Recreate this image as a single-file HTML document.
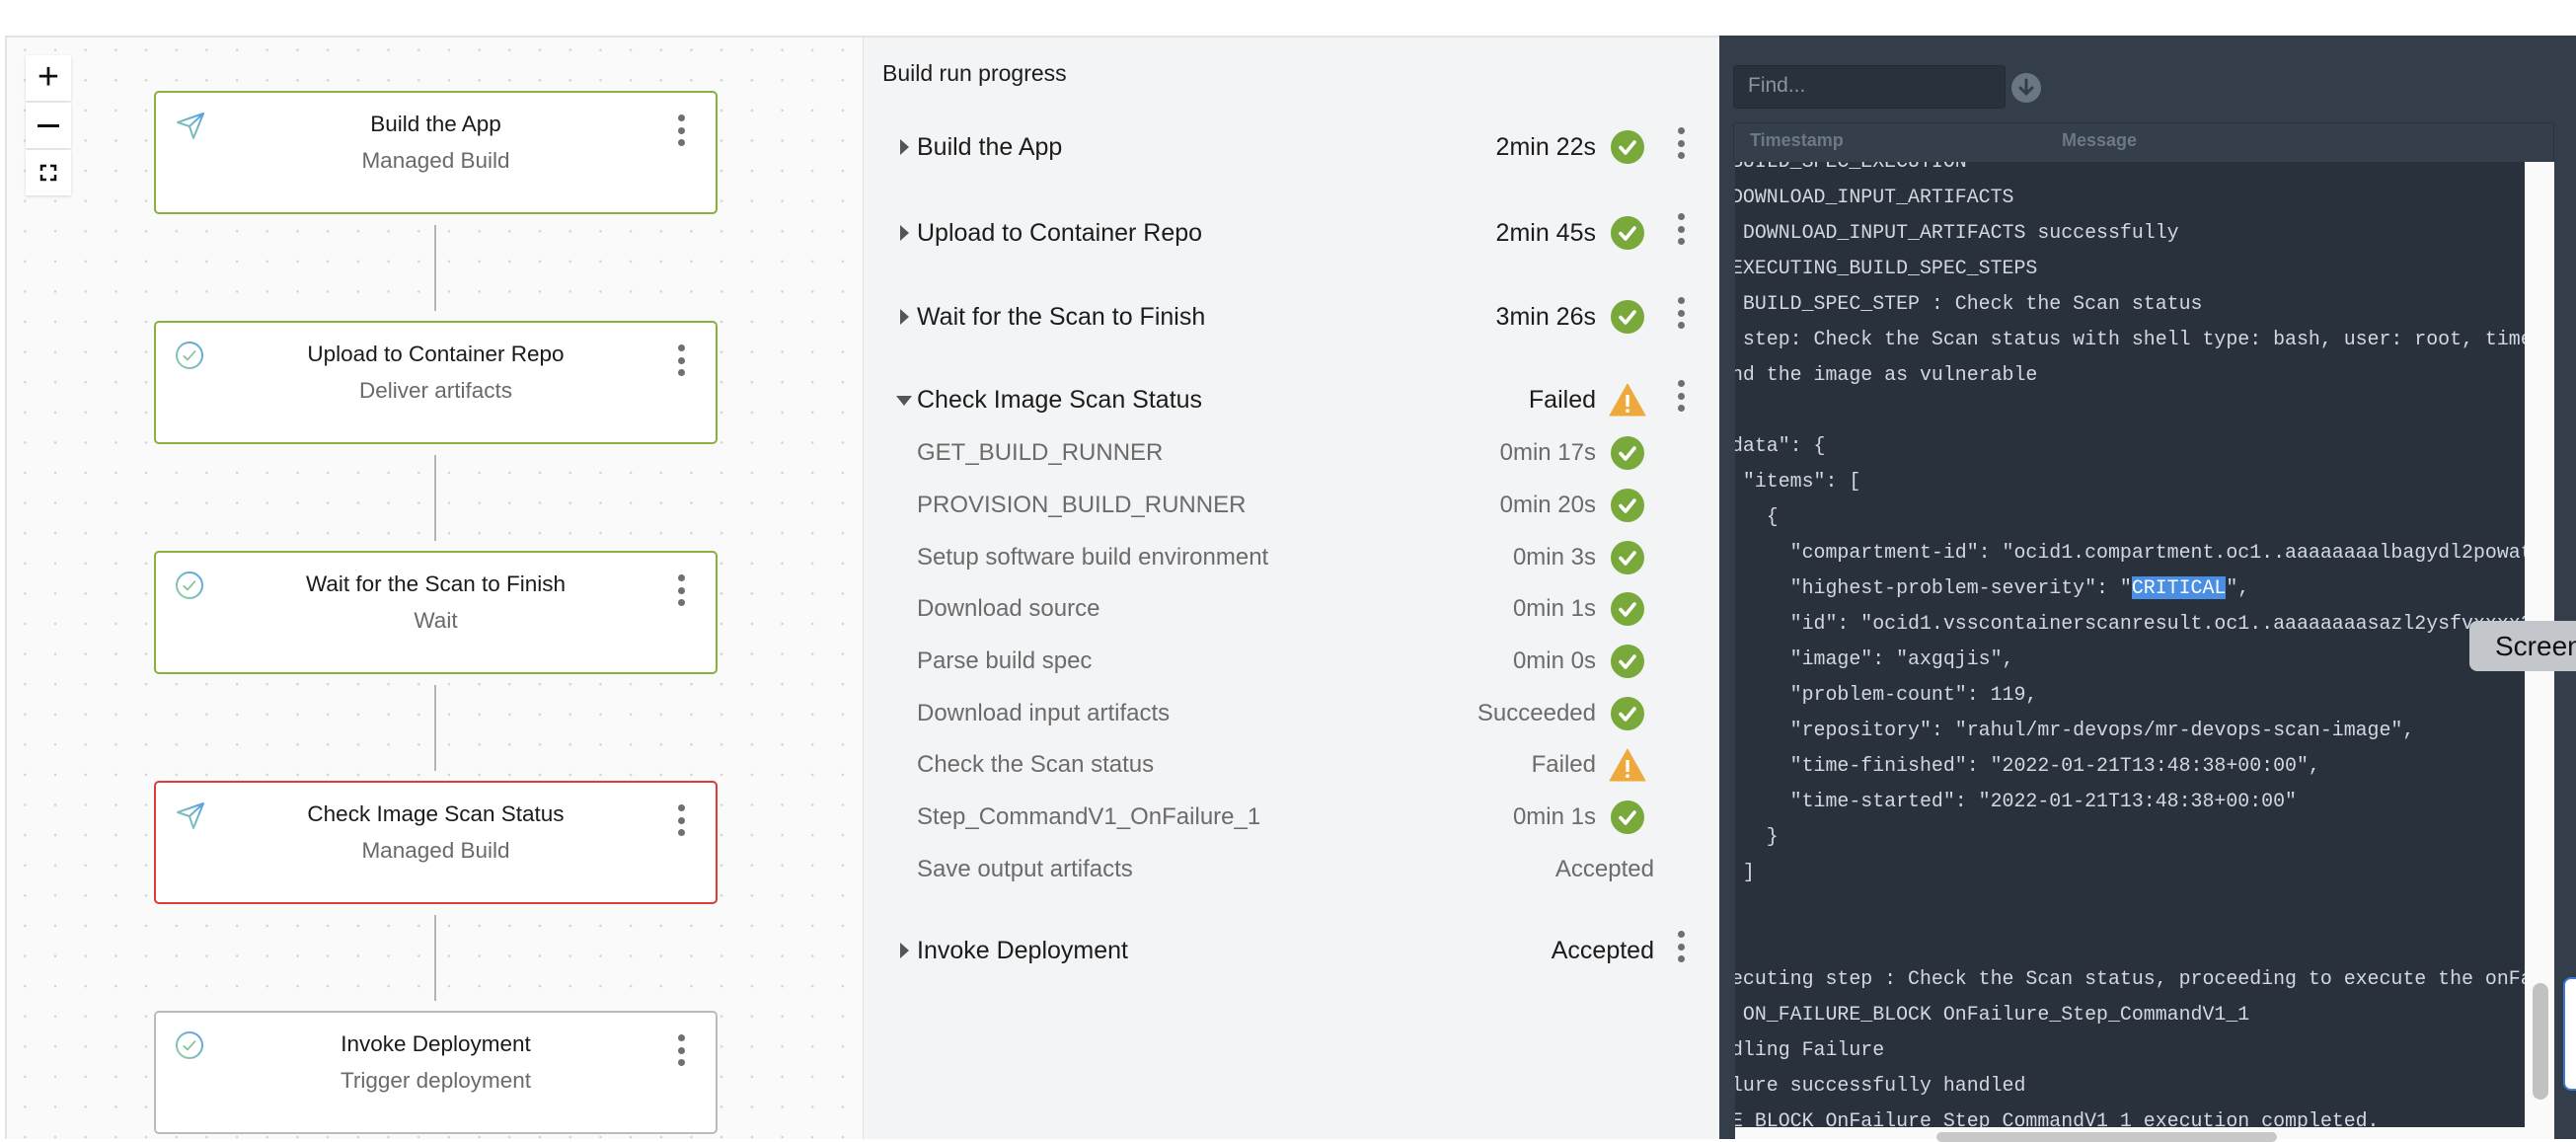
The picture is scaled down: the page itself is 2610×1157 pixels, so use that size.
<!DOCTYPE html>
<html><head><meta charset="utf-8">
<style>
*{margin:0;padding:0;box-sizing:border-box}
body{width:2610px;height:1154px;position:relative;overflow:hidden;background:#fff;font-family:"Liberation Sans",sans-serif}
.abs{position:absolute}
#left{left:5px;top:36px;width:870px;height:1118px;background-color:#fafafa;border-top:2px solid #e3e3e3;border-left:2px solid #e3e3e3;border-right:1px solid #e3e3e3;
background-image:radial-gradient(circle,#d2d2d2 1px,transparent 1.5px);background-size:30.7px 30.6px;background-position:3px 28px}
.zb{position:absolute;left:26px;width:46px;height:46px;background:#fff;box-shadow:0 1px 3px rgba(0,0,0,.15);font-size:38px;text-align:center;line-height:44px;color:#111}
.card{position:absolute;left:156px;width:571px;height:125px;background:#fff;border:2.5px solid #86b23d;border-radius:5px}
.card .t{position:absolute;left:0;right:0;top:19px;text-align:center;font-size:22.5px;color:#1a1a1a}
.card .s{position:absolute;left:0;right:0;top:56px;text-align:center;font-size:22.5px;color:#6a6a6a}
.card svg.ic{position:absolute;left:19px;top:18px}
.keb{position:absolute;width:7px}
.keb i{display:block;width:7px;height:7px;border-radius:50%;background:#6f6f6f;margin-bottom:5.5px}
.conn{position:absolute;left:440px;width:2px;background:#b5b5b5}
#mid{left:875px;top:36px;width:867px;height:1118px;background:#f3f4f6;border-top:2px solid #e3e3e3}
.row{position:absolute;left:0;width:867px;height:34px;line-height:34px}
.row .n{position:absolute;left:54px;font-size:25px;color:#1c1c1c}
.row .v{position:absolute;right:125px;font-size:25px;color:#1c1c1c}
.row.sub .n,.row.sub .v{font-size:24px;color:#6b6b6b}
.row .v.far{right:66px}
.tri{position:absolute;left:37px;top:9px;width:0;height:0;border-top:8px solid transparent;border-bottom:8px solid transparent;border-left:9px solid #555}
.tri.down{left:33px;top:13px;border-left:8px solid transparent;border-right:8px solid transparent;border-top:10px solid #555;border-bottom:0}
.ok{position:absolute;left:757px;top:0;width:34px;height:34px}
.warn{position:absolute;left:755px;top:0}
.row .keb{left:825px;top:-3px}
#right{left:1742px;top:36px;width:868px;height:1118px;background:#343e4b}
#log{left:1758px;top:164px;width:800px;height:978px;background:#29323c;overflow:hidden}
#log pre{position:absolute;left:-4px;font-family:"Liberation Mono",monospace;font-size:19.9px;color:#d3d8de;line-height:36px;white-space:pre}
.hl{background:#4a8fe4;color:#fff}
</style></head><body>
<div class="abs" style="left:0;top:0;width:2610px;height:36px;background:#fff"></div>

<div id="left" class="abs"></div>
<div class="zb" style="top:56px">+</div>
<div class="zb" style="top:104px"><div style="position:absolute;left:12px;top:22px;width:22px;height:3px;background:#111"></div></div>
<div class="zb" style="top:152px"><svg width="46" height="46" viewBox="0 0 46 46" style="position:absolute;left:0;top:0"><path d="M16 21v-5h5M25 16h5v5M30 25v5h-5M21 30h-5v-5" fill="none" stroke="#111" stroke-width="2.5"/></svg></div>

<svg width="0" height="0" style="position:absolute"><defs>
<linearGradient id="g" x1="0" y1="1" x2="1" y2="0"><stop offset="0" stop-color="#8fd19e"/><stop offset="1" stop-color="#5aa0e8"/></linearGradient>
<symbol id="ck" viewBox="0 0 34 34"><circle cx="17" cy="17" r="17" fill="#78a93a"/><path d="M10 17.5l5 5.5 9-11" fill="none" stroke="#fff" stroke-width="3.6" stroke-linecap="round" stroke-linejoin="round"/></symbol>
<symbol id="wn" viewBox="0 0 38 34"><path d="M19 1L37 33H1Z" fill="#eda93b" stroke="#eda93b" stroke-linejoin="round" stroke-width="1"/><rect x="17.3" y="12" width="3.4" height="12" fill="#fff"/><rect x="17.3" y="26.5" width="3.4" height="3.4" fill="#fff"/></symbol>
</defs></svg>

<div class="card" style="top:92px"><svg class="ic" width="32" height="32" viewBox="0 0 32 32"><path d="M3 12 L29 3 L19 28 L15 16 Z M15 16 L29 3" fill="none" stroke="url(#g)" stroke-width="2" stroke-linejoin="round"/></svg><div class="t">Build the App</div><div class="s">Managed Build</div><div class="keb" style="left:529px;top:22px"><i></i><i></i><i></i></div></div>
<div class="conn" style="top:228px;height:87px"></div>
<div class="card" style="top:325px"><svg class="ic" width="32" height="32" viewBox="0 0 32 32"><circle cx="15" cy="15" r="13" fill="none" stroke="url(#g)" stroke-width="2"/><path d="M9 15.5l4 4 8-9" fill="none" stroke="#7cbf8c" stroke-width="1.6"/></svg><div class="t">Upload to Container Repo</div><div class="s">Deliver artifacts</div><div class="keb" style="left:529px;top:22px"><i></i><i></i><i></i></div></div>
<div class="conn" style="top:461px;height:87px"></div>
<div class="card" style="top:558px"><svg class="ic" width="32" height="32" viewBox="0 0 32 32"><circle cx="15" cy="15" r="13" fill="none" stroke="url(#g)" stroke-width="2"/><path d="M9 15.5l4 4 8-9" fill="none" stroke="#7cbf8c" stroke-width="1.6"/></svg><div class="t">Wait for the Scan to Finish</div><div class="s">Wait</div><div class="keb" style="left:529px;top:22px"><i></i><i></i><i></i></div></div>
<div class="conn" style="top:694px;height:87px"></div>
<div class="card" style="top:791px;border-color:#de3a3a"><svg class="ic" width="32" height="32" viewBox="0 0 32 32"><path d="M3 12 L29 3 L19 28 L15 16 Z M15 16 L29 3" fill="none" stroke="url(#g)" stroke-width="2" stroke-linejoin="round"/></svg><div class="t">Check Image Scan Status</div><div class="s">Managed Build</div><div class="keb" style="left:529px;top:22px"><i></i><i></i><i></i></div></div>
<div class="conn" style="top:927px;height:87px"></div>
<div class="card" style="top:1024px;border-color:#b8bcc2"><svg class="ic" width="32" height="32" viewBox="0 0 32 32"><circle cx="15" cy="15" r="13" fill="none" stroke="url(#g)" stroke-width="2"/><path d="M9 15.5l4 4 8-9" fill="none" stroke="#7cbf8c" stroke-width="1.6"/></svg><div class="t">Invoke Deployment</div><div class="s">Trigger deployment</div><div class="keb" style="left:529px;top:22px"><i></i><i></i><i></i></div></div>

<div id="mid" class="abs">
<div class="abs" style="left:19px;top:23px;font-size:23px;color:#1c1c1c">Build run progress</div>
</div>
<div class="abs" style="left:875px;top:36px;width:867px;height:1118px">
<div class="row" style="top:96px"><div class="tri"></div><div class="n">Build the App</div><div class="v">2min 22s</div><svg class="ok"><use href="#ck"/></svg><div class="keb"><i></i><i></i><i></i></div></div>
<div class="row" style="top:183px"><div class="tri"></div><div class="n">Upload to Container Repo</div><div class="v">2min 45s</div><svg class="ok"><use href="#ck"/></svg><div class="keb"><i></i><i></i><i></i></div></div>
<div class="row" style="top:268px"><div class="tri"></div><div class="n">Wait for the Scan to Finish</div><div class="v">3min 26s</div><svg class="ok"><use href="#ck"/></svg><div class="keb"><i></i><i></i><i></i></div></div>
<div class="row" style="top:352px"><div class="tri down"></div><div class="n">Check Image Scan Status</div><div class="v">Failed</div><svg class="warn" width="38" height="34"><use href="#wn"/></svg><div class="keb"><i></i><i></i><i></i></div></div>
<div class="row sub" style="top:406px"><div class="n">GET_BUILD_RUNNER</div><div class="v">0min 17s</div><svg class="ok"><use href="#ck"/></svg></div>
<div class="row sub" style="top:459px"><div class="n">PROVISION_BUILD_RUNNER</div><div class="v">0min 20s</div><svg class="ok"><use href="#ck"/></svg></div>
<div class="row sub" style="top:512px"><div class="n">Setup software build environment</div><div class="v">0min 3s</div><svg class="ok"><use href="#ck"/></svg></div>
<div class="row sub" style="top:564px"><div class="n">Download source</div><div class="v">0min 1s</div><svg class="ok"><use href="#ck"/></svg></div>
<div class="row sub" style="top:617px"><div class="n">Parse build spec</div><div class="v">0min 0s</div><svg class="ok"><use href="#ck"/></svg></div>
<div class="row sub" style="top:670px"><div class="n">Download input artifacts</div><div class="v">Succeeded</div><svg class="ok"><use href="#ck"/></svg></div>
<div class="row sub" style="top:722px"><div class="n">Check the Scan status</div><div class="v">Failed</div><svg class="warn" width="38" height="34"><use href="#wn"/></svg></div>
<div class="row sub" style="top:775px"><div class="n">Step_CommandV1_OnFailure_1</div><div class="v">0min 1s</div><svg class="ok"><use href="#ck"/></svg></div>
<div class="row sub" style="top:828px"><div class="n">Save output artifacts</div><div class="v far">Accepted</div></div>
<div class="row" style="top:910px"><div class="tri"></div><div class="n">Invoke Deployment</div><div class="v far">Accepted</div><div class="keb"><i></i><i></i><i></i></div></div>
</div>

<div id="right" class="abs"></div>
<div class="abs" style="left:1756px;top:66px;width:276px;height:44px;background:#29323c;border:1.5px solid #222a33;border-radius:4px;font-size:21px;color:#8a939e;padding-left:14px;line-height:40px">Find...</div>
<svg class="abs" style="left:2038px;top:74px" width="30" height="30" viewBox="0 0 30 30"><circle cx="15" cy="15" r="15" fill="#6b7685"/><path d="M15 7v14M9 15l6 6 6-6" fill="none" stroke="#343e4b" stroke-width="3" stroke-linecap="round" stroke-linejoin="round"/></svg>
<div class="abs" style="left:1756px;top:124px;width:832px;height:40px;background:#353f4c;border:1.5px solid #2a323c;border-bottom:none;border-radius:3px 3px 0 0"></div>
<div class="abs" style="left:1773px;top:132px;font-size:18px;font-weight:bold;color:#6d7886">Timestamp</div>
<div class="abs" style="left:2089px;top:132px;font-size:18px;font-weight:bold;color:#6d7886">Message</div>
<div class="abs" style="left:1758px;top:164px;width:830px;height:990px;background:#fafafa"></div>
<div id="log" class="abs">
<pre style="top:-18px">BUILD_SPEC_EXECUTION
DOWNLOAD_INPUT_ARTIFACTS
 DOWNLOAD_INPUT_ARTIFACTS successfully
EXECUTING_BUILD_SPEC_STEPS
 BUILD_SPEC_STEP : Check the Scan status
 step: Check the Scan status with shell type: bash, user: root, timeout
nd the image as vulnerable

data": {
 "items": [
   {
     "compartment-id": "ocid1.compartment.oc1..aaaaaaaalbagydl2powat
     "highest-problem-severity": "<span class="hl">CRITICAL</span>",
     "id": "ocid1.vsscontainerscanresult.oc1..aaaaaaaasazl2ysfvxxxx2
     "image": "axgqjis",
     "problem-count": 119,
     "repository": "rahul/mr-devops/mr-devops-scan-image",
     "time-finished": "2022-01-21T13:48:38+00:00",
     "time-started": "2022-01-21T13:48:38+00:00"
   }
 ]


ecuting step : Check the Scan status, proceeding to execute the onFail
 ON_FAILURE_BLOCK OnFailure_Step_CommandV1_1
dling Failure
lure successfully handled
E_BLOCK OnFailure_Step_CommandV1_1 execution completed.</pre>
</div>
<div class="abs" style="left:2566px;top:996px;width:16px;height:118px;background:#c1c1c1;border-radius:8px"></div>
<div class="abs" style="left:1962px;top:1147px;width:345px;height:10px;background:#c8c8c8;border-radius:5px"></div>
<div class="abs" style="left:2588px;top:164px;width:22px;height:990px;background:#343e4b"></div>
<div class="abs" style="left:2502px;top:629px;width:120px;height:51px;background:#c3c7cc;border-radius:8px;font-size:28px;color:#111;line-height:51px;padding-left:26px">Screen</div>
<div class="abs" style="left:2597px;top:990px;width:30px;height:115px;background:#fff;border:2px solid #3a7bd5;border-radius:8px"></div>
</body></html>
